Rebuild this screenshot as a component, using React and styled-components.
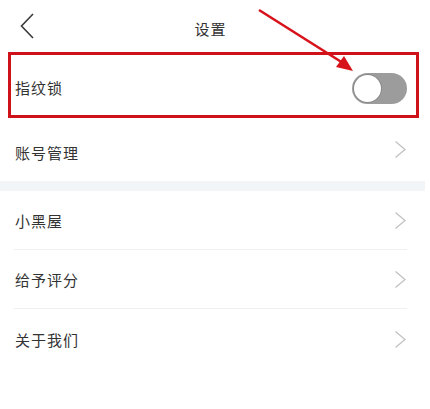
import React, { useState } from "react";
import styled, { createGlobalStyle } from "styled-components";

const Global = createGlobalStyle`
  html, body { margin: 0; padding: 0; background: #ffffff; }
  body { font-family: "Noto Sans CJK SC", "Noto Sans", sans-serif; }
`;

const Page = styled.div`
  position: relative;
  width: 425px;
  height: 409px;
  background: #ffffff;
  overflow: hidden;
`;

const Header = styled.header`
  position: relative;
  height: 57px;
  display: flex;
  align-items: center;
  justify-content: center;
`;

const BackButton = styled.button`
  position: absolute;
  left: 18px;
  top: 12px;
  width: 18px;
  height: 28px;
  padding: 0;
  border: none;
  background: none;
  display: flex;
  align-items: center;
  justify-content: center;
`;

const Title = styled.h1`
  margin: 0 0 0 -4px;
  font-size: 15px;
  font-weight: 400;
  letter-spacing: 1px;
  color: #333;
  line-height: 1;
`;

const Section = styled.section`
  display: flex;
  flex-direction: column;
`;

const Row = styled.div`
  display: flex;
  align-items: center;
  justify-content: space-between;
  height: ${(p) => p.$h}px;
  margin: 0 18px 0 14px;
  box-sizing: border-box;
  border-bottom: ${(p) => (p.$divider ? "1px solid #f0f0f0" : "none")};
`;

const Label = styled.span`
  font-size: 15px;
  letter-spacing: 1px;
  color: #333;
  padding-left: 1px;
  line-height: 1;
  margin-top: ${(p) => p.$shift || 0}px;
`;

const Gap = styled.div`
  height: 10px;
  background: #f2f5f8;
`;

const Track = styled.button`
  width: 55px;
  height: 31px;
  border-radius: 16px;
  border: none;
  padding: 2px;
  box-sizing: border-box;
  background: ${(p) => (p.$on ? "#4cd964" : "#9c9c9c")};
  display: flex;
  justify-content: ${(p) => (p.$on ? "flex-end" : "flex-start")};
  align-items: center;
  margin-top: 1px;
`;

const Knob = styled.span`
  width: 27px;
  height: 27px;
  border-radius: 50%;
  background: #ffffff;
  box-shadow: 0 0 0 1px #8a8a8a;
`;

const Highlight = styled.div`
  position: absolute;
  left: 8px;
  top: 52px;
  width: 411px;
  height: 66px;
  box-sizing: border-box;
  border: 3px solid #cf1219;
  pointer-events: none;
`;

const ArrowLayer = styled.svg`
  position: absolute;
  left: 0;
  top: 0;
  pointer-events: none;
`;

const Chevron = () => (
  <svg width="13" height="19" viewBox="0 0 13 19">
    <path d="M1.5 1.5 L11 9.5 L1.5 17.5" fill="none" stroke="#c2c2c2" strokeWidth="1.3" />
  </svg>
);

const items1 = [{ label: "账号管理" }];
const items2 = ["小黑屋", "给予评分", "关于我们"];

export default function App() {
  const [on, setOn] = useState(false);
  return (
    <Page>
      <Global />
      <Header>
        <BackButton aria-label="返回">
          <svg width="16" height="28" viewBox="0 0 16 28">
            <path d="M14 2 L2.5 14 L14 26" fill="none" stroke="#3a3a3a" strokeWidth="1.6" />
          </svg>
        </BackButton>
        <Title>设置</Title>
      </Header>
      <Section>
        <Row $h={61}>
          <Label $shift={-1}>指纹锁</Label>
          <Track $on={on} onClick={() => setOn(!on)}>
            <Knob />
          </Track>
        </Row>
        {items1.map((it) => (
          <Row key={it.label} $h={63}>
            <Label $shift={5}>{it.label}</Label>
            <Chevron />
          </Row>
        ))}
      </Section>
      <Gap />
      <Section>
        {items2.map((t, i) => (
          <Row key={t} $h={i < 2 ? 59 : 60} $divider={i < 2}>
            <Label>{t}</Label>
            <Chevron />
          </Row>
        ))}
      </Section>
      <Highlight />
      <ArrowLayer width="425" height="120" viewBox="0 0 425 120">
        <line x1="259" y1="10" x2="343" y2="63" stroke="#d8121a" strokeWidth="2.6" />
        <polygon points="353,71 336,67 344,56" fill="#d8121a" />
      </ArrowLayer>
    </Page>
  );
}
